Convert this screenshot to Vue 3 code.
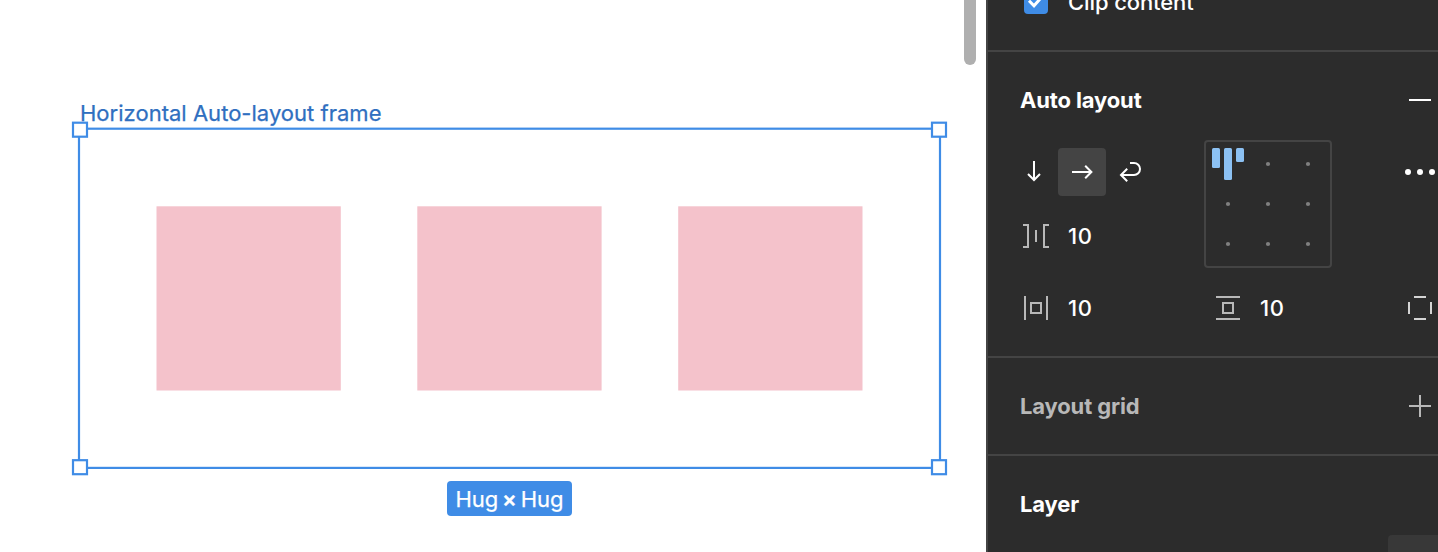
<script setup>
const blocks = [156.5, 417.3, 678.2]
const handles = [
  [80, 129.7],
  [939, 129.7],
  [80, 467.2],
  [939, 467.2],
]
const dots = [
  [62, 22], [102, 22],
  [22, 62], [62, 62], [102, 62],
  [22, 102], [62, 102], [102, 102],
]
</script>

<template>
  <div class="editor">
    <main class="canvas">
      <span class="frame-label">Horizontal Auto-layout frame</span>
      <svg class="artwork" width="986" height="552" viewBox="0 0 986 552">
        <rect v-for="x in blocks" :key="x" :x="x" y="206.3" width="184.3" height="184.2" fill="#f4c2cb" />
        <rect x="79" y="128.7" width="861" height="339.2" fill="none" stroke="#3f8ce6" stroke-width="2.2" />
        <rect
          v-for="([x, y], i) in handles" :key="i"
          :x="x - 7" :y="y - 7" width="14" height="14"
          fill="#fff" stroke="#3f8ce6" stroke-width="2.2"
        />
      </svg>
      <span class="size-badge">Hug <b>×</b> Hug</span>
      <div class="scrollbar"></div>
    </main>

    <aside class="panel">
      <section class="clip">
        <span class="checkbox">
          <svg width="24" height="24" viewBox="0 0 24 24"><path d="M5 10.7L10 15.7L18 6.8" fill="none" stroke="#fff" stroke-width="3" /></svg>
        </span>
        <span>Clip content</span>
      </section>

      <section class="auto">
        <header class="head">
          <h2>Auto layout</h2>
          <svg class="icon bright" width="24" height="24" viewBox="0 0 24 24"><path d="M1 12H23" /></svg>
        </header>
        <div class="controls">
          <div class="flow">
            <div class="directions">
              <button>
                <svg class="icon bright" width="48" height="48" viewBox="0 0 48 48"><path d="M24 13V32M18 26L24 32L30 26" /></svg>
              </button>
              <button class="active">
                <svg class="icon bright" width="48" height="48" viewBox="0 0 48 48"><path d="M14 24H33.2M27.2 17.8L33.4 24L27.2 30.2" /></svg>
              </button>
              <button>
                <svg class="icon bright" width="48" height="48" viewBox="0 0 48 48"><path d="M24 15H28A6 6 0 0 1 28 27H15.5M21.2 20.8L15 27L21.2 33.2" /></svg>
              </button>
            </div>
            <label class="field">
              <svg class="icon" width="28" height="24" viewBox="0 0 28 24"><path d="M1 1H6V23H1M14 6V18M27 1H22V23H27" /></svg>
              <span>10</span>
            </label>
          </div>
          <svg class="align" width="128" height="128" viewBox="0 0 128 128">
            <rect x="1" y="1" width="126" height="126" rx="3" fill="none" stroke="#444" stroke-width="2" />
            <g fill="#8cc1f3">
              <rect x="8" y="8" width="8" height="20" rx="1.5" />
              <rect x="20" y="8" width="8" height="32" rx="1.5" />
              <rect x="32" y="8" width="8" height="14" rx="1.5" />
            </g>
            <circle v-for="([x, y], i) in dots" :key="i" :cx="x + 2" :cy="y + 2" r="2.1" fill="#808080" />
          </svg>
          <svg class="more" width="34" height="48" viewBox="0 0 34 48">
            <circle cx="4" cy="24" r="3" /><circle cx="16" cy="24" r="3" /><circle cx="28" cy="24" r="3" />
          </svg>
        </div>
        <div class="padding-row">
          <label class="field horizontal">
            <svg class="icon" width="28" height="24" viewBox="0 0 28 24"><path d="M3 0V24M25 0V24M9 7H19V17H9Z" /></svg>
            <span>10</span>
          </label>
          <label class="field">
            <svg class="icon" width="28" height="24" viewBox="0 0 28 24"><path d="M2 1H26M2 23H26M9 7H19V17H9Z" /></svg>
            <span>10</span>
          </label>
          <svg class="icon sides" width="24" height="24" viewBox="0 0 24 24"><path d="M6 1H18M6 23H18M1 6V18M23 6V18" /></svg>
        </div>
      </section>

      <section>
        <header class="head muted">
          <h2>Layout grid</h2>
          <svg class="icon" width="24" height="24" viewBox="0 0 24 24"><path d="M1 12H23M12 1V23" /></svg>
        </header>
      </section>

      <section class="layer">
        <header class="head">
          <h2>Layer</h2>
        </header>
        <div class="popover"></div>
      </section>
    </aside>
  </div>
</template>

<style>
body {
  margin: 0;
  overflow: hidden;
}
</style>

<style scoped>
.editor {
  display: flex;
  width: 1438px;
  height: 552px;
  overflow: hidden;
  font: 22px/32px Inter, "Liberation Sans", sans-serif;
}
.canvas {
  position: relative;
  flex: 0 0 986px;
  background: #fff;
}
.artwork {
  display: block;
}
.frame-label {
  position: absolute;
  left: 80px;
  top: 97px;
  color: #2f6fc0;
  letter-spacing: 0.02px;
  -webkit-text-stroke: 0.25px #2f6fc0;
  white-space: nowrap;
}
.size-badge {
  position: absolute;
  left: 447px;
  top: 481.4px;
  width: 125px;
  height: 34.6px;
  border-radius: 4px;
  background: #3f8ce6;
  color: #fff;
  line-height: 37px;
  text-align: center;
  word-spacing: -2.4px;
  -webkit-text-stroke: 0.25px #fff;
  white-space: nowrap;
}
.size-badge b {
  font-weight: 600;
}
.scrollbar {
  position: absolute;
  left: 964px;
  top: -20px;
  width: 12px;
  height: 85px;
  border-radius: 6px;
  background: #afafaf;
}
.panel {
  box-sizing: border-box;
  flex: 1;
  min-width: 0;
  border-left: 2px solid #444;
  background: #2c2c2c;
  color: #fff;
  font-weight: 500;
}
section {
  border-bottom: 2px solid #444;
}
.clip {
  display: flex;
  align-items: flex-start;
  gap: 20px;
  box-sizing: border-box;
  height: 52px;
  padding-left: 36px;
  letter-spacing: -0.1px;
}
.clip > span {
  margin-top: -14px;
}
.clip > .checkbox {
  width: 24px;
  height: 24px;
  margin-top: -10px;
  border-radius: 4px;
  background: #3f8ce6;
}
.checkbox svg {
  display: block;
}
.head {
  display: flex;
  align-items: center;
  justify-content: space-between;
  height: 96px;
  padding: 0 6px 0 32px;
}
.muted {
  color: #b8b8b8;
}
h2 {
  margin: 0;
  font-size: 22px;
  font-weight: 700;
  line-height: 32px;
  letter-spacing: -0.14px;
}
.icon {
  display: block;
  fill: none;
  stroke: #b8b8b8;
  stroke-width: 2;
}
.bright {
  stroke: #fff;
}
.controls {
  display: flex;
  height: 112px;
  padding-left: 22px;
}
.flow {
  display: flex;
  flex-direction: column;
  gap: 16px;
  width: 194px;
}
.directions {
  display: flex;
}
button {
  width: 48px;
  height: 48px;
  padding: 0;
  border: 0;
  border-radius: 4px;
  background: none;
}
button.active {
  background: #444;
}
.flow .field {
  padding-left: 12px;
}
.field {
  display: flex;
  align-items: center;
  gap: 18px;
  height: 48px;
  letter-spacing: 0.5px;
}
.align {
  margin-top: -8px;
}
.more {
  margin-left: 72px;
  fill: #fff;
}
.padding-row {
  display: flex;
  align-items: center;
  height: 48px;
  padding: 24px 0 24px 34px;
}
.horizontal {
  width: 192px;
}
.sides {
  margin: 0 6px 0 auto;
  stroke: #d4d4d4;
}
.layer {
  position: relative;
  border-bottom: 0;
}
.popover {
  position: absolute;
  right: 0;
  bottom: 0;
  width: 50px;
  height: 17px;
  border-radius: 4px 0 0;
  background: #383838;
}
</style>
